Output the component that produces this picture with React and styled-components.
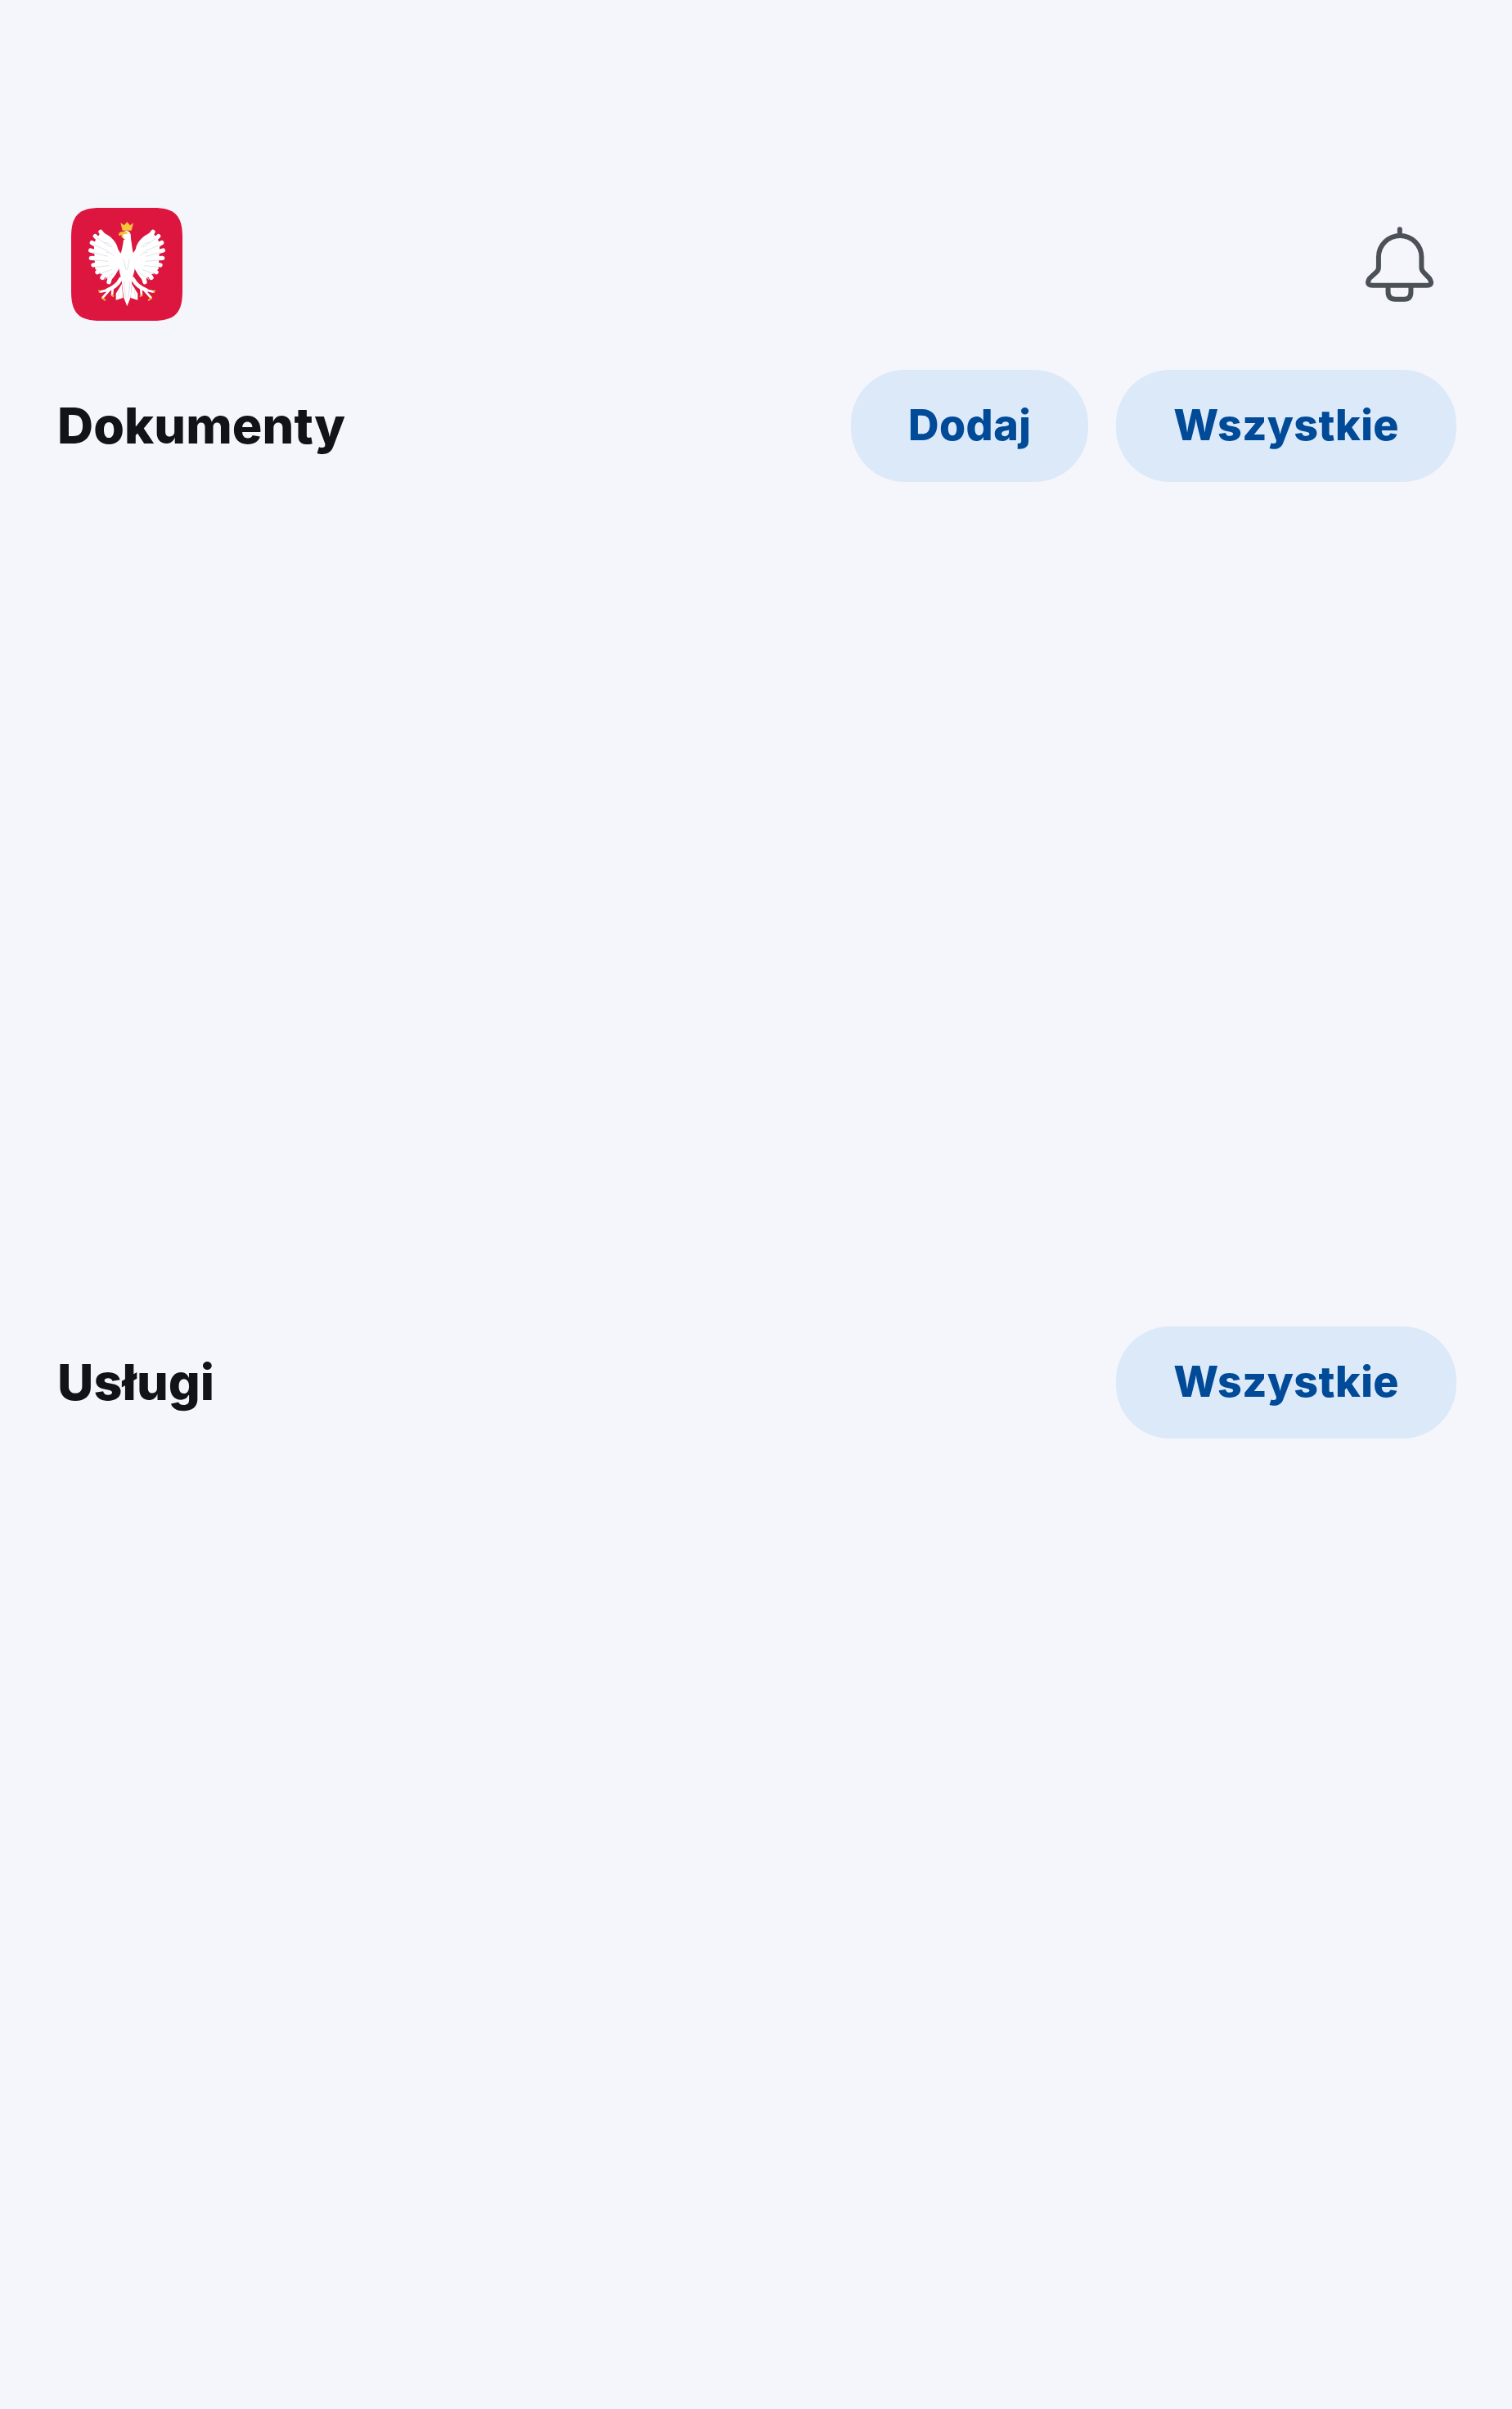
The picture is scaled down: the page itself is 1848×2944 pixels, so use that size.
import React from "react";
import styled, { createGlobalStyle } from "styled-components";

const Global = createGlobalStyle`
  html, body { margin: 0; padding: 0; background: #f5f6fb; }
  * { box-sizing: border-box; }
`;

const Page = styled.main`
  min-height: 2944px;
  background: #f5f6fb;
  padding-top: 254px;
  font-family: Inter, "Liberation Sans", sans-serif;
`;

const TopBar = styled.header`
  display: flex;
  align-items: center;
  justify-content: space-between;
  padding: 0 94px 0 87px;
  height: 138px;
`;

const LogoMark = styled.svg`
  display: block;
  width: 136px;
  height: 138px;
`;

const BellIcon = styled.svg`
  display: block;
  width: 87px;
  height: 93px;
  margin-top: -2px;
`;

const Section = styled.section`
  padding: 60px 68px 0 70px;
`;

const SectionHeader = styled.div`
  display: flex;
  align-items: center;
  justify-content: space-between;
  height: 137px;
`;

const Title = styled.h2`
  margin: 0 0 2px;
  font-size: 61px;
  font-weight: 800;
  line-height: 72px;
  letter-spacing: 0.1px;
  color: #101318;
`;

const Actions = styled.div`
  display: flex;
  gap: 34px;
`;

const Pill = styled.button`
  height: 137px;
  padding: 0 70px 2px;
  border: 0;
  border-radius: 66px;
  background: #dbe9f9;
  color: #004a98;
  font-family: inherit;
  font-size: 52px;
  font-weight: 800;
  letter-spacing: 0.4px;
  white-space: nowrap;
`;

const Content = styled.div`
  height: ${(p) => p.$height}px;
`;

const feathers = [
  [214, 190, 190, 160],
  [202, 206, 170, 176],
  [196, 222, 158, 200],
  [192, 240, 153, 228],
  [194, 258, 155, 256],
  [198, 274, 163, 282],
  [206, 288, 178, 308],
  [216, 300, 196, 328],
  [230, 308, 220, 344],
];

const Half = () => (
  <g>
    <path d="M192 160 C222 172 246 190 254 224 L266 244 L264 282 C252 306 240 326 226 340 L170 296 L165 200 Z" fill="#fff" />
    {feathers.map(([x1, y1, x2, y2], i) => (
      <line key={i} x1={x1} y1={y1} x2={x2} y2={y2} stroke="#ffffff" strokeWidth="16" strokeLinecap="round" />
    ))}
    {feathers.slice(1, 8).map(([x1, y1, x2, y2], i) => (
      <line key={i} x1={x1 + 24} y1={y1 + 10} x2={x2 + 8} y2={y2 + 7} stroke="#dfe2e8" strokeWidth="3" />
    ))}
    <path d="M232 216 C224 204 214 198 204 200 M240 250 C230 238 220 234 210 236" stroke="#dfe2e8" strokeWidth="3" fill="none" />
    <path d="M264 332 C252 356 236 366 214 374" stroke="#fff" strokeWidth="14" fill="none" strokeLinecap="round" />
    <path d="M218 373 L188 380 M220 376 L197 402 M234 370 L232 392" stroke="#fff" strokeWidth="8" strokeLinecap="round" />
    <path d="M187 381 L184 376 M196 403 L206 410 M232 392 L236 396" stroke="#f0b429" strokeWidth="6" strokeLinecap="round" />
    <path d="M268 350 L246 386 L246 410 L272 402 Z" fill="#fff" />
    <path d="M258 372 L254 400" stroke="#dfe2e8" strokeWidth="2.5" />
  </g>
);

const Eagle = () => (
  <g>
    <Half />
    <g transform="translate(572 0) scale(-1 1)">
      <Half />
    </g>
    <path d="M266 232 C270 218 272 204 274 190 L300 178 C304 205 306 220 308 232 C322 262 318 300 306 330 L300 400 L287 433 L274 400 L266 330 C254 300 252 262 266 232 Z" fill="#fff" />
    <circle cx="284" cy="172" r="16" fill="#fff" />
    <path d="M270 160 C260 160 255 166 256 174 L272 172 C264 176 262 180 276 184 L296 172 L282 158 Z" fill="#f0c238" />
    <path d="M272 172 C278 166 290 166 300 172 L300 190 L274 186 Z" fill="#fff" />
    <path d="M263 127 L276 136 L287 124 L298 136 L310 127 L303 155 L270 155 Z" fill="#f4c43a" />
    <path d="M274 260 L284 300 M296 260 L288 300 M275 340 L281 400 M298 340 L292 400" stroke="#dfe2e8" strokeWidth="3" />
  </g>
);

export default function App() {
  return (
    <Page>
      <Global />
      <TopBar>
        <LogoMark viewBox="82 72 408 414" aria-label="Godło Polski">
          <path
            d="M190 72 H382 C462 72 490 100 490 180 V378 C490 458 462 486 382 486 H190 C110 486 82 458 82 378 V180 C82 100 110 72 190 72 Z"
            fill="#dc163f"
          />
          <Eagle />
        </LogoMark>
        <BellIcon viewBox="80 75 260 280" fill="none" stroke="#4c5158" strokeWidth="18" strokeLinecap="round" strokeLinejoin="round">
          <path d="M133 190 A79 79 0 0 1 291 190 V228 Q291 238 298 245 L320 268 Q336 294 310 294 H112 Q84 294 100 268 L125 245 Q133 238 133 228 Z" />
          <path d="M211 88 V105" />
          <path d="M168 300 V318 Q168 345 195 345 H228 Q252 345 252 318 V300" />
        </BellIcon>
      </TopBar>
      <Section>
        <SectionHeader>
          <Title>Dokumenty</Title>
          <Actions>
            <Pill>Dodaj</Pill>
            <Pill>Wszystkie</Pill>
          </Actions>
        </SectionHeader>
        <Content $height={1032} />
        <SectionHeader>
          <Title>Usługi</Title>
          <Actions>
            <Pill>Wszystkie</Pill>
          </Actions>
        </SectionHeader>
      </Section>
    </Page>
  );
}
